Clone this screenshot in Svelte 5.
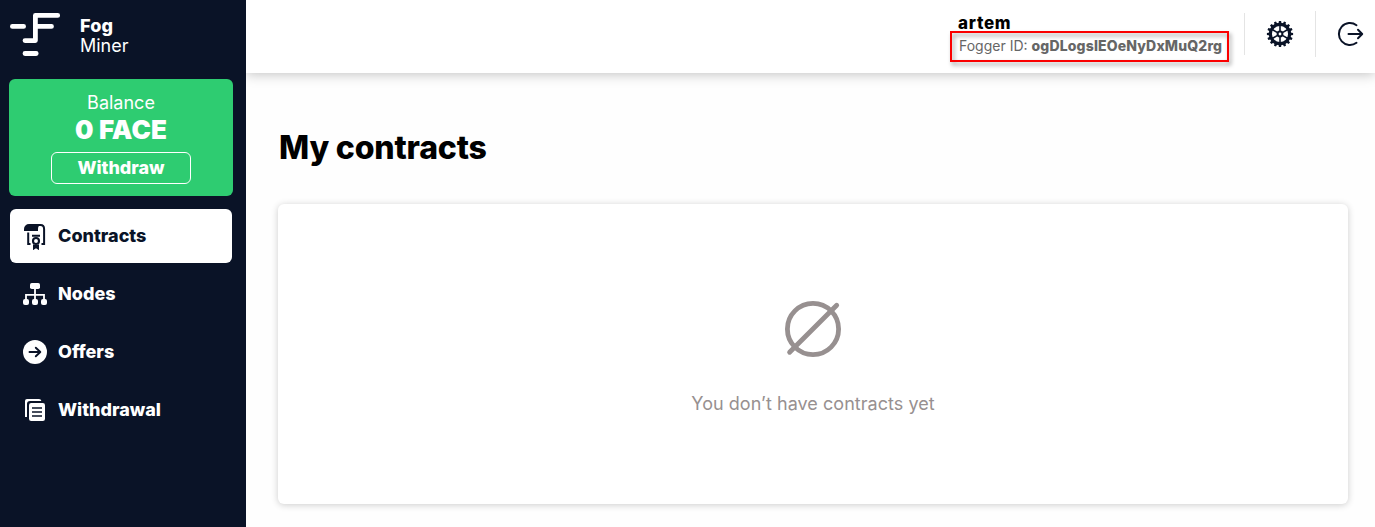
<script>
  const items = ['Contracts', 'Nodes', 'Offers', 'Withdrawal'];
  let active = $state('Contracts');
  const teeth = Array.from({ length: 16 }, (_, i) => i * 22.5);
  const spokes = [0, 60, 120, 180, 240, 300];
</script>

<div class="layout">
  <aside>
    <div class="brand">
      <svg width="64" height="60" viewBox="0 0 64 60" fill="none" stroke="#fff" stroke-width="4.8" stroke-linecap="round" stroke-linejoin="round">
        <path d="M57.7 15.4H35.4V40.6H25M35.4 26.4H51.5M12.4 26.4H23.6M25 53.5H36.2" />
      </svg>
      <div class="name"><b>Fog</b><span>Miner</span></div>
    </div>
    <section class="balance">
      <span class="label">Balance</span>
      <strong>0 FACE</strong>
      <button>Withdraw</button>
    </section>
    <nav>
      {#each items as item}
        <button class="item" class:active={active === item} onclick={() => (active = item)}>
          <svg width="26" height="28" viewBox="0 0 26 28" fill="none" stroke="currentColor">
            {#if item === 'Contracts'}
              <path d="M2 9V7a5 5 0 0 1 5-5h12.5q-3.5 1.3-3.5 5v2z" fill="currentColor" stroke="none" />
              <path d="M16 2.9h2.5Q22.1 2.9 22.1 7V22H19.5M6.2 10.5V22H8.5M10 13.8h8" stroke-width="2" />
              <circle cx="14" cy="19" r="3" stroke-width="2.1" />
              <path d="M11 22.2q3 1.7 6 0V28.2L14 26.2L11 28.2z" fill="currentColor" stroke="none" />
            {:else if item === 'Nodes'}
              <g fill="currentColor" stroke="none">
                <rect x="8" y="3" width="10" height="6" rx="1.8" />
                <rect x="1" y="19" width="6" height="6" rx="2" />
                <rect x="10" y="19" width="6" height="6" rx="2" />
                <rect x="19" y="19" width="6" height="6" rx="2" />
              </g>
              <path d="M13 8v12M4 20v-5.2h18V20" stroke-width="1.8" />
            {:else if item === 'Offers'}
              <circle cx="13" cy="14" r="12" fill="currentColor" stroke="none" />
              <path d="M7.5 14h10.5M13.8 9.7l4.5 4.3-4.5 4.3" stroke="#0a1327" stroke-width="1.9" stroke-linecap="round" stroke-linejoin="round" />
            {:else}
              <path d="M3 21V5a2 2 0 0 1 2-2h12q2 0 2.4 2H8a3 3 0 0 0-3 3v13z" fill="currentColor" stroke="none" />
              <rect x="7" y="7" width="16" height="18" rx="2.2" fill="currentColor" stroke="none" />
              <path d="M10 12h10M10 16h10M10 20h10" stroke="#0a1327" stroke-width="1.7" />
            {/if}
          </svg>
          <span>{item}</span>
        </button>
      {/each}
    </nav>
  </aside>

  <div class="page">
    <header>
      <div class="user">
        <b>artem</b>
        <div class="fogger"><span>Fogger ID:</span> <strong>ogDLogsIEOeNyDxMuQ2rg</strong><i></i></div>
      </div>
      <button class="tool gear" aria-label="Settings">
        <svg width="28" height="28" viewBox="-14 -14 28 28" fill="none" stroke="#0a1327">
          {#each teeth as a}
            <path d="M-1.5-10L-1.1-13.1H1.1L1.5-10z" fill="#0a1327" stroke="none" transform="rotate({a})" />
          {/each}
          <circle r="9.6" stroke-width="3.1" />
          <circle r="2.4" stroke-width="2" />
          {#each spokes as a}
            <path d="M0-2.8V-9" stroke-width="1.6" transform="rotate({a})" />
          {/each}
        </svg>
      </button>
      <button class="tool exit" aria-label="Log out">
        <svg width="28" height="28" viewBox="0 0 28 28" fill="none" stroke="#0a1327" stroke-width="2" stroke-linecap="round" stroke-linejoin="round">
          <path d="M20.5 5.2A11 11 0 1 0 20.5 22.8M12.5 14H26M22 9.8l4.2 4.2-4.2 4.2" />
        </svg>
      </button>
    </header>
    <main>
      <h1>My contracts</h1>
      <section class="empty">
        <svg width="60" height="60" viewBox="0 0 60 60" fill="none" stroke="#979090" stroke-width="4.8" stroke-linecap="round">
          <circle cx="30" cy="30" r="25.6" />
          <path d="M6.6 53.2L53.7 6.2" />
        </svg>
        <p>You don’t have contracts yet</p>
      </section>
    </main>
  </div>
</div>

<style>
  :global(body) { margin: 0; overflow: hidden; background: #fefefe; }
  .layout { display: flex; height: 527px; overflow: hidden; font-family: Inter, "Liberation Sans", sans-serif; }
  .layout * { box-sizing: border-box; white-space: nowrap; }
  button { font: inherit; border: 0; padding: 0; background: none; cursor: pointer; }
  svg { display: block; flex: none; }
  aside { width: 246px; flex: none; background: #0a1327; color: #fff; }
  .brand { display: flex; height: 79px; }
  .name { display: flex; flex-direction: column; padding: 16px 0 0 16px; font-size: 18px; line-height: 20px; }
  .name b { font-weight: 800; letter-spacing: 0.1px; }
  .name span { letter-spacing: 0; }
  .balance { display: flex; flex-direction: column; align-items: center; width: 224px; height: 117px; margin-left: 9px; padding-top: 12px; border-radius: 6px; background: #2ecc71; }
  .label { font-size: 18px; line-height: 24px; }
  .balance strong { font-size: 26px; line-height: 30px; font-weight: 900; letter-spacing: 0.15px; }
  .balance button { width: 140px; height: 32px; margin-top: 7px; border: 1px solid #fff; border-radius: 6px; color: #fff; font-size: 18px; font-weight: 800; letter-spacing: -0.05px; line-height: 30px; }
  nav { display: flex; flex-direction: column; gap: 4px; padding: 13px 14px 0 10px; }
  .item { display: flex; align-items: center; gap: 10px; height: 54px; padding-left: 12px; border-radius: 6px; color: #fff; font-size: 18px; font-weight: 800; letter-spacing: 0; }
  .item span { padding-bottom: 2px; }
  .item.active { background: #fff; color: #0a1327; }
  .page { display: flex; flex-direction: column; flex: 1; min-width: 0; }
  header { position: relative; display: flex; align-items: center; justify-content: flex-end; height: 73px; flex: none; background: #fff; box-shadow: 0 1px 12px rgba(0, 0, 0, .25); clip-path: inset(0 0 -30px 0); }
  .user { align-self: flex-start; width: 286px; padding-top: 12px; }
  .user b { display: block; font-size: 17px; line-height: 22px; font-weight: 800; letter-spacing: 0.7px; }
  .fogger { position: relative; padding-left: 1px; font-size: 14px; line-height: 24px; color: #666; display: flex; gap: 4px; }
  .fogger strong { font-weight: 800; letter-spacing: 0.15px; }
  .fogger i { position: absolute; left: -8px; top: -3px; width: 279px; height: 31px; border: 2px solid #fb0000; filter: drop-shadow(2px 3px 2px rgba(0, 0, 0, .4)); }
  .tool { display: grid; place-items: center; border-left: 1px solid #e4e4e4; }
  .gear { width: 71px; height: 42px; margin-top: -5px; }
  .exit { width: 60px; height: 46px; margin-top: -5px; padding-left: 9px; }
  main { flex: 1; padding: 55px 27px 0 32px; }
  h1 { margin: 0 0 0 1px; font-size: 32px; line-height: 40px; font-weight: 800; letter-spacing: -0.18px; color: #000; }
  .empty { display: flex; flex-direction: column; align-items: center; height: 300px; margin-top: 36px; padding-top: 95px; border-radius: 6px; background: #fff; box-shadow: 0 1px 7px rgba(0, 0, 0, .2); }
  .empty p { margin: 33px 0 0; font-size: 18px; line-height: 24px; letter-spacing: 0.04px; color: #979090; }
</style>
